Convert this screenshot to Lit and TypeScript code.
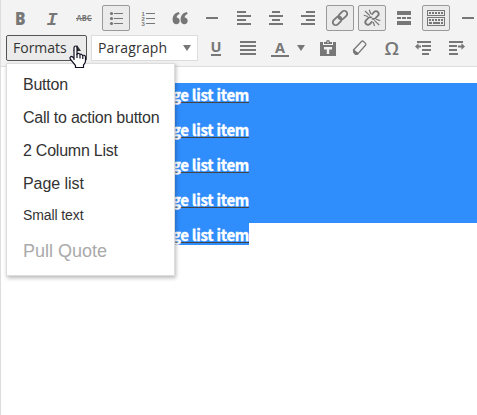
import { LitElement, html, svg, css } from "lit";
import { customElement } from "lit/decorators.js";

// Every toolbar icon is drawn on a 20x20 grid.
const bar = (x: number, y: number, w: number, h = 2) =>
  svg`<rect class="crisp" x=${x} y=${y} width=${w} height=${h}></rect>`;
const glyph = (t: string, cls: string, x: number, y: number, w: number) =>
  svg`<text class=${cls} x=${x} y=${y} textLength=${w} lengthAdjust="spacingAndGlyphs">${t}</text>`;

const icons: Record<string, unknown> = {
  bold: glyph("B", "bold", 5, 17, 10.5),
  italic: glyph("I", "italic", 4.5, 17, 11),
  strike: svg`${glyph("ABC", "abc", 2.5, 13, 15)}${bar(2, 10, 16, 1)}`,
  bullets: svg`${[5, 10, 15].map((y) => svg`<circle cx="5.5" cy=${y + 0.5} r="1.6"></circle>${bar(8, y, 9, 1)}`)}`,
  numbers: svg`${[5, 10, 15].map((y, i) => svg`<text class="num" x="3.4" y=${y + 3}>${i + 1}</text>${bar(8, y, 9, 1)}`)}`,
  quote: svg`<path d="M8.8 4C4.6 4.8 2.6 7.8 2.6 11.7C2.6 14.6 4.2 16.2 6.3 16.2C8.4 16.2 9.7 14.8 9.7 12.8C9.7 10.9 8.4 9.6 6.6 9.5C6.8 7.9 7.9 6.6 9.7 6Z M16.8 4C12.6 4.8 10.6 7.8 10.6 11.7C10.6 14.6 12.2 16.2 14.3 16.2C16.4 16.2 17.7 14.8 17.7 12.8C17.7 10.9 16.4 9.6 14.6 9.5C14.8 7.9 15.9 6.6 17.7 6Z"></path>`,
  rule: bar(4, 9, 12),
  left: svg`${bar(3, 3, 9)}${bar(3, 7, 14)}${bar(3, 11, 9)}${bar(3, 15, 14)}`,
  center: svg`${bar(6, 3, 8)}${bar(3, 7, 14)}${bar(6, 11, 8)}${bar(3, 15, 14)}`,
  right: svg`${bar(8, 3, 9)}${bar(3, 7, 14)}${bar(8, 11, 9)}${bar(3, 15, 14)}`,
  link: svg`<g class="line"><rect x="-5" y="-2.9" width="10" height="5.8" rx="2.9" transform="translate(12.8 7.2) rotate(-45)"></rect><rect x="-5" y="-2.9" width="10" height="5.8" rx="2.9" transform="translate(7.2 12.8) rotate(-45)"></rect></g>`,
  unlink: svg`<g class="line"><path d="M9.5 6.6L12.2 3.9Q14 2.3 15.9 4Q17.6 5.9 16 7.7L13.3 10.4Q11.8 11.6 10 10.4M10.4 13.4L7.8 16Q6 17.6 4.1 16Q2.4 14.1 4 12.3L6.6 9.7Q8.2 8.5 9.8 9.7"></path></g><g class="thin"><path d="M3 3L7.8 7.6M7.3 1.8L8.7 6M1.8 7.2L6 8.5M12.4 12.4L17.2 17M11.2 14L12.6 18M14 11.3L18.2 12.6"></path></g>`,
  more: svg`${bar(3, 3, 14, 4)}${bar(3, 9, 4)}${bar(8, 9, 4)}${bar(13, 9, 4)}${bar(3, 13, 14, 4)}`,
  keyboard: svg`<g class="box"><rect x="1.5" y="2.5" width="17" height="5"></rect><rect x="1.5" y="9.5" width="17" height="8"></rect></g>${[3, 6, 9, 12, 15].map((x) => svg`${bar(x, 4, 2)}${bar(x, 11, 2)}`)}${bar(3, 14, 3)}${bar(7, 14, 7)}${bar(15, 14, 2)}`,
  underline: svg`${glyph("U", "letter", 4.4, 14, 11)}${bar(5, 16, 10)}`,
  justify: svg`${[3, 7, 11, 15].map((y) => bar(2, y, 16))}`,
  color: svg`${glyph("A", "letter", 5, 15, 10)}${bar(1, 17, 18)}`,
  paste: svg`<path fill-rule="evenodd" d="M2 4H5V7H15V4H18V18H2ZM6 6V4H8Q8 2 10 2Q12 2 12 4H14V6ZM9.3 3.5V4.8H10.7V3.5Z"></path><path class="cut" d="M6 9H14V11.5H11.2V16H8.8V11.5H6Z"></path>`,
  eraser: svg`<path class="hollow" d="M3.5 12L11.5 3.5Q12.5 2.6 13.5 3.5L15.5 5.4Q16.4 6.3 15.5 7.3L8 15.7Z"></path><path d="M3 11.5L8.8 15.2L7.6 17H5.2L3 14.6Z"></path>`,
  omega: glyph("Ω", "omega", 2.6, 17, 14.5),
  outdent: svg`${bar(8, 3, 9)}${bar(8, 7, 9)}${bar(8, 11, 9)}${bar(8, 15, 7)}${bar(3, 3, 5)}<path d="M1 8.5L4.5 5.3V7.5H7V9.5H4.5V11.7Z"></path>`,
  indent: svg`${bar(3, 3, 14)}${bar(3, 7, 8)}${bar(3, 11, 8)}${bar(3, 15, 9)}<path d="M19 8.5L15.5 5.3V7.5H12V9.5H15.5V11.7Z"></path>`,
};

@customElement("tool-icon")
export class ToolIcon extends LitElement {
  static properties = { name: {}, active: { type: Boolean, reflect: true } };
  declare name: string;
  declare active: boolean;
  static styles = css`
    :host { box-sizing: border-box; flex: none; width: 28px; height: 26px; display: flex; align-items: center; justify-content: center; border: 1px solid transparent; border-radius: 2px; }
    :host([active]) { background: #ebebeb; border-color: #999; }
    svg { width: 20px; height: 20px; fill: #777; overflow: visible; display: block; }
    .crisp { shape-rendering: crispEdges; }
    .line { fill: none; stroke: #777; stroke-width: 1.8; }
    .thin { fill: none; stroke: #777; stroke-width: 1.2; }
    .box { fill: none; stroke: #777; stroke-width: 1; }
    .cut { fill: #f3f3f3; }
    .hollow { fill: #f3f3f3; stroke: #777; stroke-width: 1.3; }
    .bold { font: 800 18px "Open Sans", sans-serif; }
    .italic { font: italic bold 19px "Liberation Mono", monospace; }
    .abc { font: bold 8px "Open Sans", sans-serif; }
    .num { font: bold 6px "Liberation Sans", sans-serif; }
    .letter { font: bold 15px "Open Sans", sans-serif; }
    .omega { font: 600 17.5px "Open Sans", sans-serif; }
  `;
  render() {
    return html`<svg viewBox="0 0 20 20">${icons[this.name]}</svg>`;
  }
}

@customElement("app-root")
export class AppRoot extends LitElement {
  static styles = css`
    :host { display: block; position: relative; box-sizing: border-box; width: 477px; height: 415px; overflow: hidden; background: #fff; border-left: 1px solid #ddd; font-family: "Open Sans", sans-serif; }
    .toolbar { box-sizing: border-box; height: 67px; padding: 5px 0 0 5px; background: #f3f3f3; border-bottom: 1px solid #ddd; display: flex; flex-direction: column; gap: 4px; }
    .row { display: flex; gap: 4px; height: 26px; }
    .select { box-sizing: border-box; flex: none; display: flex; align-items: center; justify-content: space-between; height: 26px; padding: 0 7px 0 6px; border: 1px solid #ddd; background: #fff; color: #333; font-size: 14px; line-height: 24px; }
    .formats { width: 81px; padding-right: 5px; border-color: #555; border-radius: 2px; background: #ebebeb; }
    .paragraph { width: 107px; letter-spacing: .15px; }
    .arrow { width: 8px; height: 6px; background: #777; clip-path: polygon(0 0, 100% 0, 50% 100%); }
    .paragraph .arrow { margin-right: -1px; }
    .formats .arrow { background: #333; clip-path: polygon(50% 0, 100% 100%, 0 100%); }
    .rest { display: flex; align-items: center; gap: 4px; }
    .color { display: flex; align-items: center; width: 44px; }
    .color .arrow { margin-left: 3px; }
    .content { padding: 16px 0 0 40px; font: bold 15px/22px "Noto Sans CJK SC", sans-serif; letter-spacing: -.3px; }
    .line { box-sizing: border-box; height: 35px; background: #308dfc; color: #fff; }
    .line:last-child { height: 22px; width: 208px; }
    .words { display: flex; justify-content: flex-end; width: 208px; height: 22px; }
    .words span { height: 20px; line-height: 24px; white-space: nowrap; -webkit-text-stroke: .35px #fff; background: linear-gradient(#444, #444) 0 19px / 100% 1px no-repeat; }
    .menu { position: absolute; left: 5px; top: 63px; box-sizing: border-box; width: 169px; height: 213px; padding: 4px 0 0 16px; background: #fff; border: 1px solid #ddd; box-shadow: 1px 2px 4px rgba(0, 0, 0, .28); color: #333; font: 16px/33px "Liberation Sans", sans-serif; letter-spacing: -.24px; white-space: nowrap; }
    .page { letter-spacing: -.05px; }
    .small { font-size: 14px; line-height: 31px; letter-spacing: -.1px; }
    .pull { font-size: 18px; line-height: 40px; letter-spacing: 0; color: #aaa; }
    .hand { position: absolute; left: 68px; top: 45px; width: 18px; height: 24px; fill: #fff; stroke: #112; stroke-width: 1.2; }
  `;
  render() {
    const top = ["bold", "italic", "strike", "bullets", "numbers", "quote", "rule", "left", "center", "right", "link", "unlink", "more", "keyboard", "rule"];
    const on = ["bullets", "link", "unlink", "keyboard"];
    const icon = (n: string) => html`<tool-icon .name=${n} ?active=${on.includes(n)}></tool-icon>`;
    return html`
      <div class="toolbar">
        <div class="row">${top.map(icon)}</div>
        <div class="row">
          <div class="select formats">Formats<i class="arrow"></i></div>
          <div class="select paragraph">Paragraph<i class="arrow"></i></div>
          <div class="rest">
            ${icon("underline")}${icon("justify")}
            <div class="color">${icon("color")}<i class="arrow"></i></div>
            ${["paste", "eraser", "omega", "outdent", "indent"].map(icon)}
          </div>
        </div>
      </div>
      <div class="content">
        ${[1, 2, 3, 4, 5].map(() => html`<div class="line"><div class="words"><span>Page list item</span></div></div>`)}
      </div>
      <div class="menu">
        <div>Button</div><div>Call to action button</div><div>2 Column List</div><div class="page">Page list</div>
        <div class="small">Small text</div><div class="pull">Pull Quote</div>
      </div>
      <svg class="hand" viewBox="0 0 18 24">
        <path d="M5 15V3Q5 1 6.5 1Q8 1 8 3V9Q9.5 7.5 11 9.5Q12.5 8.5 13.5 10.5Q16.5 9.5 16.5 12.5V16Q16.5 18 14.5 20V22.5H6.5V20.5L1.2 14Q.5 12.5 2 11.5Q3.2 11.2 5 13.5"></path>
        <path d="M8 9V13M11 10V13.5M13.8 11V14"></path>
      </svg>
    `;
  }
}
